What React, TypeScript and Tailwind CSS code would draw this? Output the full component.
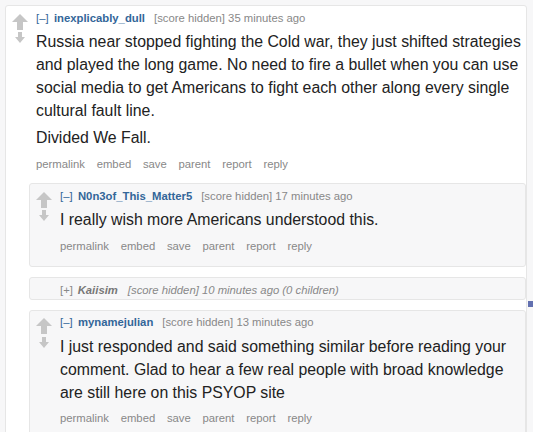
import React from 'react'

const FONT = "font-['Liberation_Sans',Arial,sans-serif]"

function Arrows() {
  return (
    <div className="flex flex-col items-center pt-[7.5px]">
      <svg width="16" height="16" viewBox="0 0 16 16">
        <path d="M8 0 L16 8 H11 V16 H5 V8 H0 Z" fill="#c6c6c6" />
      </svg>
      <svg width="10" height="11" viewBox="0 0 10 11" className="mt-[2.5px]">
        <path d="M3 0 H7 V5 H10 L5 11 L0 5 H3 Z" fill="#c6c6c6" />
      </svg>
    </div>
  )
}

interface CommentProps {
  author: string
  time: string
  body: string[]
  bg: string
  children?: React.ReactNode
}

function Comment({ author, time, body, bg, children }: CommentProps) {
  return (
    <div className={`border border-[#e6e6e6] rounded-[3px] ${bg}`}>
      <div className="flex">
        <div className="w-[30px] shrink-0 pr-[3px]">
          <Arrows />
        </div>
        <div className="flex-1 min-w-0 pt-[4.6px] pb-[11.7px]">
          <div className="text-[11.3px] leading-[15px] whitespace-nowrap">
            <span className="text-[#369]">[–]</span>
            <span className="ml-[5.4px] font-bold text-[#369]">{author}</span>
            <span className="ml-[9px] text-[#888]">[score hidden] {time}</span>
          </div>
          <div className="mt-[4.4px] text-[15.83px] leading-[23px] text-[#222]">
            {body.map((p, i) => (
              <p key={i} className={i > 0 ? 'mt-[4px]' : ''}>
                {p}
              </p>
            ))}
          </div>
          <ul className="mt-[7.6px] flex gap-[11.7px] text-[11.3px] leading-[15px] text-[#888]">
            <li>permalink</li>
            <li>embed</li>
            <li>save</li>
            <li>parent</li>
            <li>report</li>
            <li>reply</li>
          </ul>
        </div>
      </div>
      {children && <div className="pl-[23px] flex flex-col gap-[10px]">{children}</div>}
    </div>
  )
}

function Collapsed() {
  return (
    <div className="border border-[#e6e6e6] rounded-[3px] bg-[#f7f7f8] flex h-[23px]">
      <div className="w-[30px] shrink-0" />
      <div className="pt-[5.6px] text-[11.3px] leading-[15px] whitespace-nowrap text-[#888]">
        <span>[+]</span>
        <span className="ml-[4.8px] font-bold italic text-[#777]">Kaiisim</span>
        <span className="ml-[10px] italic">[score hidden] 10 minutes ago (0 children)</span>
      </div>
    </div>
  )
}

export default function App() {
  return (
    <div className={`${FONT} relative w-[533px] h-[432px] overflow-hidden bg-[#f7f7f8] pl-[5px] pt-[5px]`}>
      <div className="w-[522px]">
        <Comment
          bg="bg-white"
          author="inexplicably_dull"
          time="35 minutes ago"
          body={[
            'Russia near stopped fighting the Cold war, they just shifted strategies and played the long game. No need to fire a bullet when you can use social media to get Americans to fight each other along every single cultural fault line.',
            'Divided We Fall.',
          ]}
        >
          <Comment
            bg="bg-[#f7f7f8]"
            author="N0n3of_This_Matter5"
            time="17 minutes ago"
            body={['I really wish more Americans understood this.']}
          />
          <Collapsed />
          <Comment
            bg="bg-[#f7f7f8]"
            author="mynamejulian"
            time="13 minutes ago"
            body={[
              'I just responded and said something similar before reading your comment. Glad to hear a few real people with broad knowledge are still here on this PSYOP site',
            ]}
          />
        </Comment>
      </div>
      <div className="absolute left-[528px] top-[301px] w-[5px] h-[6px] bg-[#6270b0]" />
    </div>
  )
}
